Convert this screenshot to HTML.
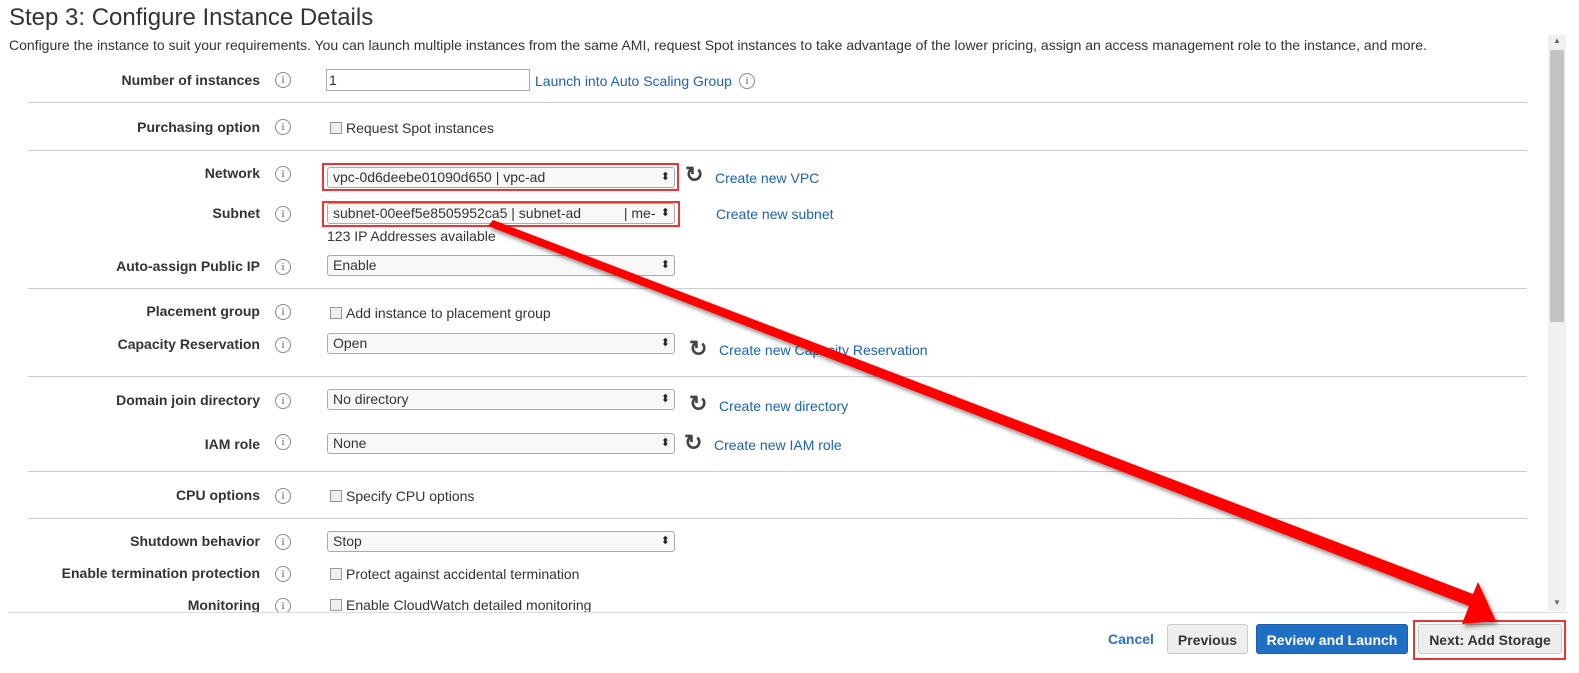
<!DOCTYPE html><html><head><style>
body{margin:0;width:1579px;height:672px;overflow:hidden;background:#fff;font-family:"Liberation Sans",Arial,sans-serif;font-size:14px;color:#333;position:relative}
.a{position:absolute;white-space:nowrap}
h1{position:absolute;left:9px;top:4px;margin:0;font-weight:normal;font-size:24px;color:#333}
.lbl{position:absolute;right:1319px;font-weight:bold;font-size:14px;color:#333}
.i{position:absolute;left:275px;width:14px;height:14px;border:1px solid #888;border-radius:50%;font-size:11px;text-align:center;line-height:14px;color:#555;font-family:"Liberation Serif",serif}
.hr{position:absolute;left:28px;width:1499px;height:1px;background:#ccc}
.sel{position:absolute;left:327px;width:341px;height:19px;border:1px solid #aaa;border-radius:3px;background:#f8f8f8;font-size:14px;line-height:19px;padding-left:5px;box-sizing:content-box}
.sel:after{content:"⬍";position:absolute;right:4px;top:0;font-size:11px;color:#222}
.cb{display:inline-block;width:10px;height:10px;border:1px solid #999;background:#eee;vertical-align:-1px;margin-right:4px}
.lnk{color:#1a62b4}
.ref{position:absolute;font-size:22px;font-weight:bold;color:#444}
.btn{position:absolute;top:624px;height:30px;border-radius:3px;font-weight:bold;font-size:14px;line-height:30px;text-align:center;box-sizing:border-box}
</style></head><body>
<h1>Step 3: Configure Instance Details</h1>
<div class="a" style="left:9px;top:37px;font-size:14px">Configure the instance to suit your requirements. You can launch multiple instances from the same AMI, request Spot instances to take advantage of the lower pricing, assign an access management role to the instance, and more.</div>

<div class="lbl" style="top:72px">Number of instances</div><div class="i" style="top:72px">i</div>
<div class="a" style="left:326px;top:69px;width:200px;height:20px;border:1px solid #aaa;line-height:20px;padding-left:2px">1</div>
<div class="a lnk" style="left:535px;top:73px">Launch into Auto Scaling Group</div><div class="i" style="top:73px;left:739px">i</div>
<div class="hr" style="top:102px"></div>

<div class="lbl" style="top:119px">Purchasing option</div><div class="i" style="top:119px">i</div>
<div class="a" style="left:330px;top:120px"><span class="cb"></span>Request Spot instances</div>
<div class="hr" style="top:150px"></div>

<div class="lbl" style="top:165px">Network</div><div class="i" style="top:166px">i</div>
<div class="sel" style="top:167px">vpc-0d6deebe01090d650 | vpc-ad</div>
<div class="a" style="left:322px;top:163px;width:357px;height:28px;border:2px solid #e33;box-sizing:border-box"></div>
<div class="ref" style="left:685px;top:162px">↻</div><div class="a lnk" style="left:715px;top:170px">Create new VPC</div>

<div class="lbl" style="top:205px">Subnet</div><div class="i" style="top:206px">i</div>
<div class="sel" style="top:203px">subnet-00eef5e8505952ca5 | subnet-ad&nbsp;&nbsp;&nbsp;&nbsp;&nbsp;&nbsp;&nbsp;&nbsp;&nbsp;&nbsp;&nbsp;| me-</div>
<div class="a" style="left:322px;top:201px;width:358px;height:26px;border:2px solid #e33;box-sizing:border-box"></div>
<div class="a lnk" style="left:716px;top:206px">Create new subnet</div>
<div class="a" style="left:327px;top:228px">123 IP Addresses available</div>

<div class="lbl" style="top:258px">Auto-assign Public IP</div><div class="i" style="top:259px">i</div>
<div class="sel" style="top:255px">Enable</div>
<div class="hr" style="top:288px"></div>

<div class="lbl" style="top:303px">Placement group</div><div class="i" style="top:304px">i</div>
<div class="a" style="left:330px;top:305px"><span class="cb"></span>Add instance to placement group</div>
<div class="lbl" style="top:336px">Capacity Reservation</div><div class="i" style="top:337px">i</div>
<div class="sel" style="top:333px">Open</div>
<div class="ref" style="left:689px;top:336px">↻</div><div class="a lnk" style="left:719px;top:342px">Create new Capacity Reservation</div>
<div class="hr" style="top:376px"></div>

<div class="lbl" style="top:392px">Domain join directory</div><div class="i" style="top:393px">i</div>
<div class="sel" style="top:389px">No directory</div>
<div class="ref" style="left:689px;top:391px">↻</div><div class="a lnk" style="left:719px;top:398px">Create new directory</div>
<div class="lbl" style="top:436px">IAM role</div><div class="i" style="top:434px">i</div>
<div class="sel" style="top:433px">None</div>
<div class="ref" style="left:684px;top:430px">↻</div><div class="a lnk" style="left:714px;top:437px">Create new IAM role</div>
<div class="hr" style="top:471px"></div>

<div class="lbl" style="top:487px">CPU options</div><div class="i" style="top:488px">i</div>
<div class="a" style="left:330px;top:488px"><span class="cb"></span>Specify CPU options</div>
<div class="hr" style="top:518px"></div>

<div class="lbl" style="top:533px">Shutdown behavior</div><div class="i" style="top:534px">i</div>
<div class="sel" style="top:531px">Stop</div>
<div class="lbl" style="top:565px">Enable termination protection</div><div class="i" style="top:566px">i</div>
<div class="a" style="left:330px;top:566px"><span class="cb"></span>Protect against accidental termination</div>
<div class="lbl" style="top:597px">Monitoring</div><div class="i" style="top:598px">i</div>
<div class="a" style="left:330px;top:597px"><span class="cb"></span>Enable CloudWatch detailed monitoring</div>

<div class="a" style="left:1548px;top:35px;width:18px;height:576px;background:#f0f0f0"></div>
<div class="a" style="left:1550px;top:50px;width:14px;height:272px;background:#c2c2c2"></div>
<div class="a" style="left:1553px;top:36px;font-size:8px;color:#666">▲</div>
<div class="a" style="left:1553px;top:598px;font-size:8px;color:#666">▼</div>
<div class="a" style="left:8px;top:612px;width:1560px;height:60px;background:#fff;border-top:1px solid #ddd"></div>

<div class="a" style="left:1108px;top:631px;font-weight:bold;color:#2a6ed6">Cancel</div>
<div class="btn" style="left:1167px;width:81px;border:1px solid #ccc;background:#eee">Previous</div>
<div class="btn" style="left:1256px;width:152px;background:#1f6fc5;color:#fff;border:1px solid #1a5ea8">Review and Launch</div>
<div class="btn" style="left:1418px;width:144px;border:1px solid #ccc;background:#eee">Next: Add Storage</div>
<div class="a" style="left:1413px;top:620px;width:153px;height:40px;border:2px solid #e33;box-sizing:border-box"></div>

<svg class="a" style="left:0;top:0" width="1579" height="672">
<defs><filter id="s"><feDropShadow dx="2" dy="3" stdDeviation="2" flood-color="#000" flood-opacity="0.45"/></filter></defs>
<polygon filter="url(#s)" fill="#f00" points="488,226 493,220 1473,594 1478,582 1496,621 1462,624 1469,606" />
</svg>
</body></html>
